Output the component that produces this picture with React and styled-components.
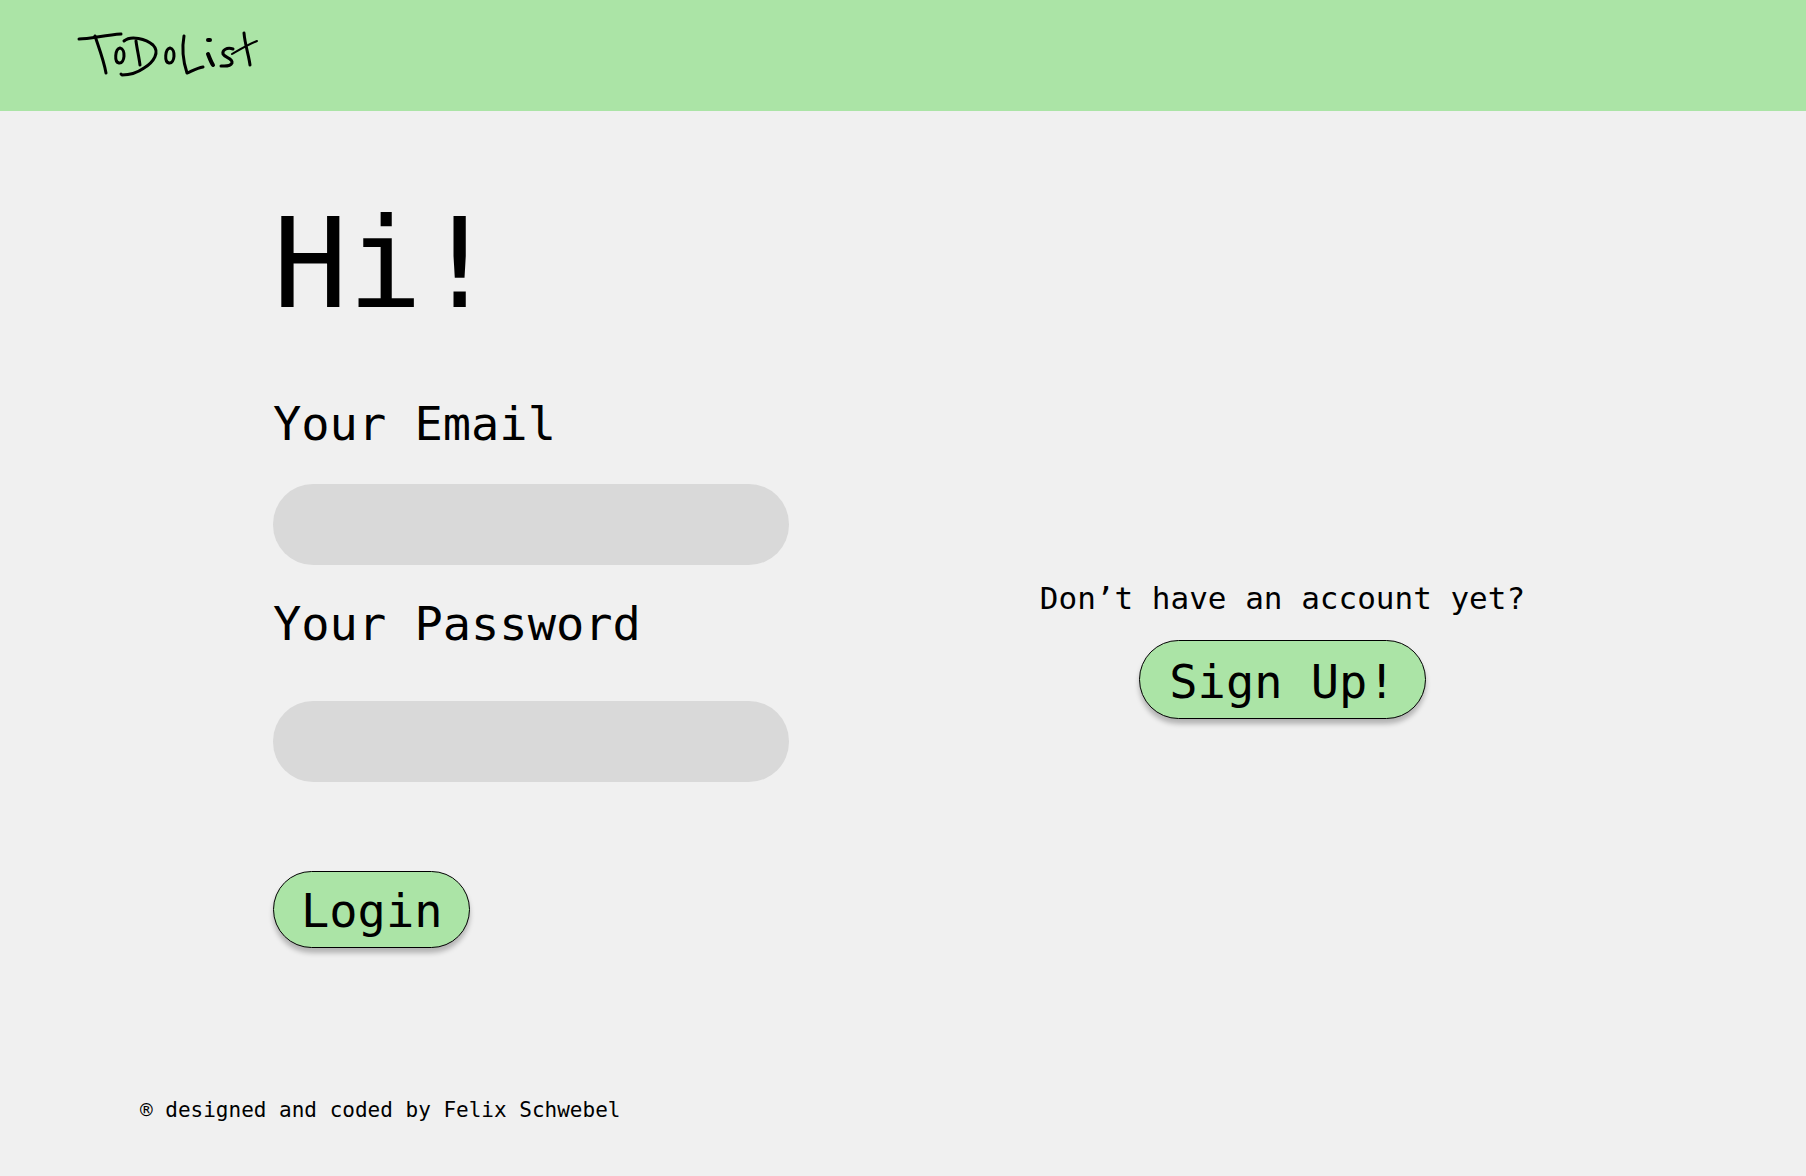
import React from "react";
import styled, { createGlobalStyle } from "styled-components";

const green = "#abe4a6";

const GlobalStyle = createGlobalStyle`
  *, *::before, *::after { box-sizing: border-box; }
  body {
    margin: 0;
    background: #f0f0f0;
    color: #000;
    font-family: "DejaVu Sans Mono", "Liberation Mono", monospace;
  }
`;

const Page = styled.div`
  min-height: 100vh;
  display: flex;
  flex-direction: column;
`;

const Header = styled.header`
  display: flex;
  background: ${green};
  padding: 25px 70px 26px;
`;

const HomeLink = styled.a`
  display: block;
`;

const LogoDrawing = styled.svg`
  display: block;
  fill: none;
  stroke: #000;
  stroke-linecap: round;
  stroke-linejoin: round;
`;

const Main = styled.main`
  flex: 1;
  display: grid;
  grid-template-columns: minmax(0, 516px) 1fr;
  align-items: start;
  padding: 81px 30px 0 273px;
`;

const LoginForm = styled.form`
  display: flex;
  flex-direction: column;
  align-items: flex-start;
`;

const Title = styled.h1`
  margin: 0 0 60px;
  font-size: 124px;
  line-height: 144px;
  font-weight: 400;
`;

const Field = styled.div`
  width: 100%;
  display: flex;
  flex-direction: column;
  gap: ${(p) => p.$gap}px;
  margin-bottom: ${(p) => p.$after}px;
`;

const Label = styled.label`
  font-size: 47px;
  line-height: 56px;
`;

const TextInput = styled.input`
  width: 100%;
  height: 81px;
  padding: 0 32px;
  border: 0;
  border-radius: 40px;
  background: #d9d9d9;
  font: inherit;
  font-size: 31px;
`;

const PillButton = styled.button`
  padding: ${(p) => (p.$wide ? "13px 29px 9px" : "11px 27px 9px")};
  border: 1px solid #000;
  border-radius: 40px;
  background: ${green};
  box-shadow: 0 5px 5px rgba(0, 0, 0, 0.25);
  color: #000;
  font: inherit;
  font-size: 47px;
  line-height: 55px;
  cursor: pointer;
`;

const SignUp = styled.section`
  align-self: center;
  display: flex;
  flex-direction: column;
  align-items: center;
  gap: 22px;
  padding-top: 60px;
`;

const Prompt = styled.p`
  margin: 0;
  font-size: 31px;
  line-height: 40px;
`;

const Footer = styled.footer`
  padding: 52px 140px;
  font-size: 21px;
  line-height: 28px;
`;

function Logo() {
  return (
    <LogoDrawing width="195" height="60" viewBox="0 0 195 60" role="img" aria-label="ToDoList">
      <g strokeWidth="3">
        <path d="M9 14 C20 14 35 10 51 9" />
        <path d="M25 11 C29 23 34 36 36 48" />
        <path d="M50 23 C45 24 44 37 49 38 C55 39 56 24 50 23" />
        <path d="M54 16 C61 10 76 14 83 20 C90 27 84 37 74 43 C67 48 59 50 52 50 L51 49" />
        <path d="M66 16 C67 24 69 32 70 40" />
        <path d="M100 23 C95 24 94 37 99 38 C105 39 106 24 100 23" />
        <path d="M114 11 C112 22 113 36 117 48 C122 46 127 43 133 42" />
        <path d="M138 29 C140 34 141 37 143 40" strokeWidth="4" />
        <path d="M138 15 L140 15" strokeWidth="4" />
        <path d="M163 24 C157 22 152 25 153 29 C155 33 163 33 162 38 C160 42 155 41 151 41" />
        <path d="M162 29 C169 25 179 19 187 16" strokeWidth="2" />
        <path d="M174 8 C175 20 179 31 180 40" />
      </g>
    </LogoDrawing>
  );
}

export default function App() {
  return (
    <>
      <GlobalStyle />
      <Page>
        <Header>
          <HomeLink href="#">
            <Logo />
          </HomeLink>
        </Header>
        <Main>
          <LoginForm onSubmit={(e) => e.preventDefault()}>
            <Title>Hi!</Title>
            <Field $gap={32} $after={31}>
              <Label htmlFor="email">Your Email</Label>
              <TextInput id="email" type="email" />
            </Field>
            <Field $gap={49} $after={89}>
              <Label htmlFor="password">Your Password</Label>
              <TextInput id="password" type="password" />
            </Field>
            <PillButton type="submit">Login</PillButton>
          </LoginForm>
          <SignUp>
            <Prompt>Don’t have an account yet?</Prompt>
            <PillButton type="button" $wide>Sign Up!</PillButton>
          </SignUp>
        </Main>
        <Footer>® designed and coded by Felix Schwebel</Footer>
      </Page>
    </>
  );
}
